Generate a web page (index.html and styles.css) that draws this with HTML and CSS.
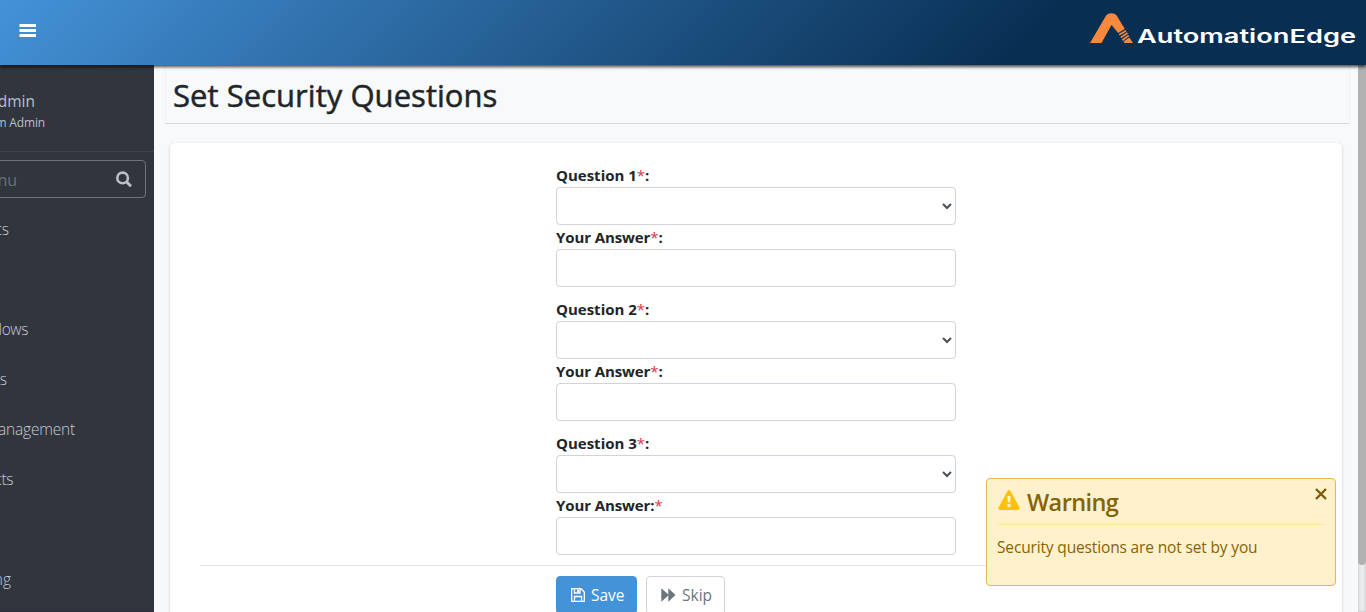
FILE: index.html
```html
<!DOCTYPE html>
<html lang="en">
<head>
<meta charset="utf-8">
<title>Set Security Questions</title>
<link rel="stylesheet" href="styles.css">
</head>
<body>
<header class="topbar">
  <svg class="burger" width="17" height="14" viewBox="0 0 17 14"><path fill="#fff" d="M.5 0H17v3H.5zM.5 5H17v3H.5zM.5 10H17v3H.5z"/></svg>
  <svg class="logo" width="276" height="44" viewBox="0 0 276 44">
    <path fill="#f6893d" d="M0 35L15.500 8.500Q17.500 5.200 21.300 5.200Q25.300 5.200 27.300 8.500L34.800 21L28.200 25L21.500 17L11.500 35Z"/>
    <path fill="#f6893d" d="M34.500 35H43L39.300 29.500L33.500 33.500Z"/>
    <path stroke="#f6893d" stroke-width="1.700" d="M29.200 26.800L36 22.700M30.800 29.500L37.500 25M32.300 32.200L38.700 27.500"/>
    <text class="logo-text" x="47" y="35" textLength="219" lengthAdjust="spacingAndGlyphs">AutomationEdge</text>
  </svg>
</header>
<div class="shell">
  <aside class="sidebar">
    <div class="user">
      <div class="clip name">dmin</div>
      <div class="clip role">m Admin</div>
    </div>
    <div class="search">
      <span class="clip hint">nu</span>
      <svg width="16" height="16" viewBox="0 0 16 16" fill="none" stroke="#bcbfc3"><circle cx="6.600" cy="6.900" r="5.300" stroke-width="2.600"/><path stroke-width="3" d="M10.500 10.800L15 15.300"/></svg>
    </div>
    <nav class="menu">
      <div class="clip w-ts">ts</div>
      <div class="clip"></div>
      <div class="clip w-lows">lows</div>
      <div class="clip w-s">s</div>
      <div class="clip w-management">anagement</div>
      <div class="clip w-cts">cts</div>
      <div class="clip"></div>
      <div class="clip w-ng">ng</div>
    </nav>
  </aside>
  <main class="content">
    <div class="page-title"><h1>Set Security Questions</h1></div>
    <section class="card">
      <form class="form">
        <div class="group">
          <label><span>Question 1<i>*</i>:</span></label><select class="control"></select>
          <label class="answer"><span>Your Answer<i>*</i>:</span></label><input class="control">
        </div>
        <div class="group">
          <label><span>Question 2<i>*</i>:</span></label><select class="control"></select>
          <label class="answer"><span>Your Answer<i>*</i>:</span></label><input class="control">
        </div>
        <div class="group">
          <label><span>Question 3<i>*</i>:</span></label><select class="control"></select>
          <label class="answer"><span>Your Answer:<i>*</i></span></label><input class="control">
        </div>
      </form>
      <div class="actions">
        <button class="btn save"><svg width="14" height="14" viewBox="0 0 14 14" fill="none" stroke="#fff" stroke-width="1.300"><path d="M.7.7H10L13.300 4V13.300H.7ZM3.500 13V8.500H10.500V13M3.500 1V5H9V1"/><path fill="#fff" stroke="none" d="M6.200 1.500H8.200V4.300H6.200Z"/></svg><span>Save</span></button>
        <button class="btn skip"><svg width="15" height="14" viewBox="0 0 15 14" fill="#6c757d"><path d="M.3 .3L7.300 6.500V.3L14.500 7L7.300 13.700V7.500L.3 13.700Z"/></svg><span>Skip</span></button>
      </div>
    </section>
  </main>
  <div class="scrollbar"><div class="thumb"></div></div>
</div>
<div class="toast">
  <div class="toast-head">
    <svg width="22" height="20" viewBox="0 0 22 20"><path fill="#ffc107" d="M9.500 1Q11 -.9 12.500 1L21.500 17.500Q22.200 20 20 20H2Q-.2 20 .5 17.500Z"/><path fill="#fff3cd" d="M9.400 6H12.600L12.200 12.500H9.800ZM9.500 14H12.500V17H9.500Z"/></svg>
    <h2>Warning</h2>
  </div>
  <p>Security questions are not set by you</p>
  <svg class="close" width="12" height="12" viewBox="0 0 12 12" stroke="#7b5c07" stroke-width="2.400"><path d="M1 1L11 11M11 1L1 11"/></svg>
</div>
</body>
</html>
```

FILE: styles.css
```css
* { box-sizing: border-box; }
body {
  margin: 0;
  height: 612px;
  overflow: hidden;
  display: flex;
  flex-direction: column;
  font-family: "Open Sans", "Noto Sans", sans-serif;
  font-size: 16px;
  line-height: 24px;
  color: #212529;
  background: #f8f9fb;
}
svg { display: block; flex: none; }
.topbar {
  height: 65px;
  flex: none;
  display: flex;
  justify-content: space-between;
  padding-left: 19px;
  background: linear-gradient(135deg, #4492d8 0%, #082e52 75%);
  box-shadow: 0 2px 3px rgba(0, 0, 0, .7);
  z-index: 2;
}
.burger { margin-top: 24px; }
.logo { margin-top: 8px; }
.logo-text { font: 600 19px Inter, sans-serif; fill: #fff; }
.shell { flex: 1; display: flex; min-height: 0; }
.sidebar { width: 154px; flex: none; background: #31353d; color: #b8bfce; overflow: hidden; border-bottom: 1px solid #2b2b38; }
.clip { display: flex; justify-content: flex-end; white-space: nowrap; }
.user { height: 87px; padding-top: 24px; border-bottom: 1px solid #3e424a; }
.name { width: 35px; font-size: 15.5px; }
.role { width: 45px; font-size: 12px; line-height: 20px; letter-spacing: -.15px; }
.search {
  height: 38px;
  margin: 8px 8px 0 -10px;
  border: 1px solid #6f747c;
  border-radius: 4px;
  display: flex;
  align-items: center;
  justify-content: space-between;
  padding-right: 13px;
}
.hint { width: 26px; color: #6c7179; padding-top: 1px; }
.menu { padding-top: 6px; font-weight: 300; font-size: 15.5px; color: #c8cad0; }
.menu .clip { height: 50px; line-height: 50px; }
.w-ts { width: 9px; }
.w-lows { width: 28px; letter-spacing: -.4px; }
.w-s { width: 7px; }
.w-management { width: 75px; letter-spacing: -.2px; }
.w-cts { width: 13px; letter-spacing: -.4px; }
.w-ng { width: 11px; }
.content { flex: 1; padding: 0 8px 0 11px; overflow: hidden; }
.page-title { height: 59px; padding: 10px 7px 0; border: 1px solid #eff1f4; border-bottom-color: #d5d8dc; border-top: 0; }
h1 { margin: 0; font-size: 31px; line-height: 40px; font-weight: 500; white-space: nowrap; -webkit-text-stroke: .5px #212529; letter-spacing: .04px; }
.card {
  height: 510px;
  margin: 19px 8px 0 5px;
  padding: 20px 30px 0;
  background: #fff;
  border-radius: 5px;
  box-shadow: 0 1px 3px rgba(0, 0, 0, .22);
}
.form { width: 400px; margin: 0 auto; }
.group { display: flex; flex-direction: column; margin-bottom: 10px; }
label { height: 24px; font-size: 15px; font-weight: 700; white-space: nowrap; }
.answer { letter-spacing: -.1px; }
label i { font-style: normal; color: #dc3545; font-weight: 400; }
.control { width: 400px; height: 38px; border: 1px solid #ced4da; border-radius: 4px; background: #fff; padding: 6px 12px; color: #495057; font-size: 16px; }
select.control { padding: 6px 5px; }
.actions { display: flex; gap: 9px; border-top: 1px solid #e5e5e5; padding: 10px 0 0 356px; }
.btn { height: 38px; display: flex; align-items: center; gap: 6px; font: 400 15.5px "Open Sans", sans-serif; border-radius: 4px; padding: 0 12px 0 14px; border: 1px solid #ced4da; }
.save { width: 81px; background: #4492d8; border-color: #4492d8; color: #fff; }
.skip { width: 79px; background: #fff; color: #6c757d; }
.scrollbar { width: 8px; background: #e9ebec; box-shadow: inset 0 0 3px #bbb; }
.thumb { height: 500px; background: #b1b1b1; border-radius: 0 0 4px 4px; }
.toast {
  position: absolute;
  left: 986px;
  top: 478px;
  width: 350px;
  height: 108px;
  padding: 5px 10px;
  z-index: 3;
  background: #fff1cc;
  border: 1px solid #e2b757;
  border-radius: 4px;
  color: #856404;
}
.toast-head { display: flex; gap: 7px; height: 41px; padding: 6px 0 0 1px; border-bottom: 1px solid #ffe69b; }
h2 { margin: -4px 0 0; font-size: 23.5px; line-height: 32px; font-weight: 600; letter-spacing: -.6px; }
.toast p { margin: 10px 0 0; font-size: 15.5px; letter-spacing: -.15px; white-space: nowrap; }
.close { position: absolute; right: 8px; top: 9px; }
```
